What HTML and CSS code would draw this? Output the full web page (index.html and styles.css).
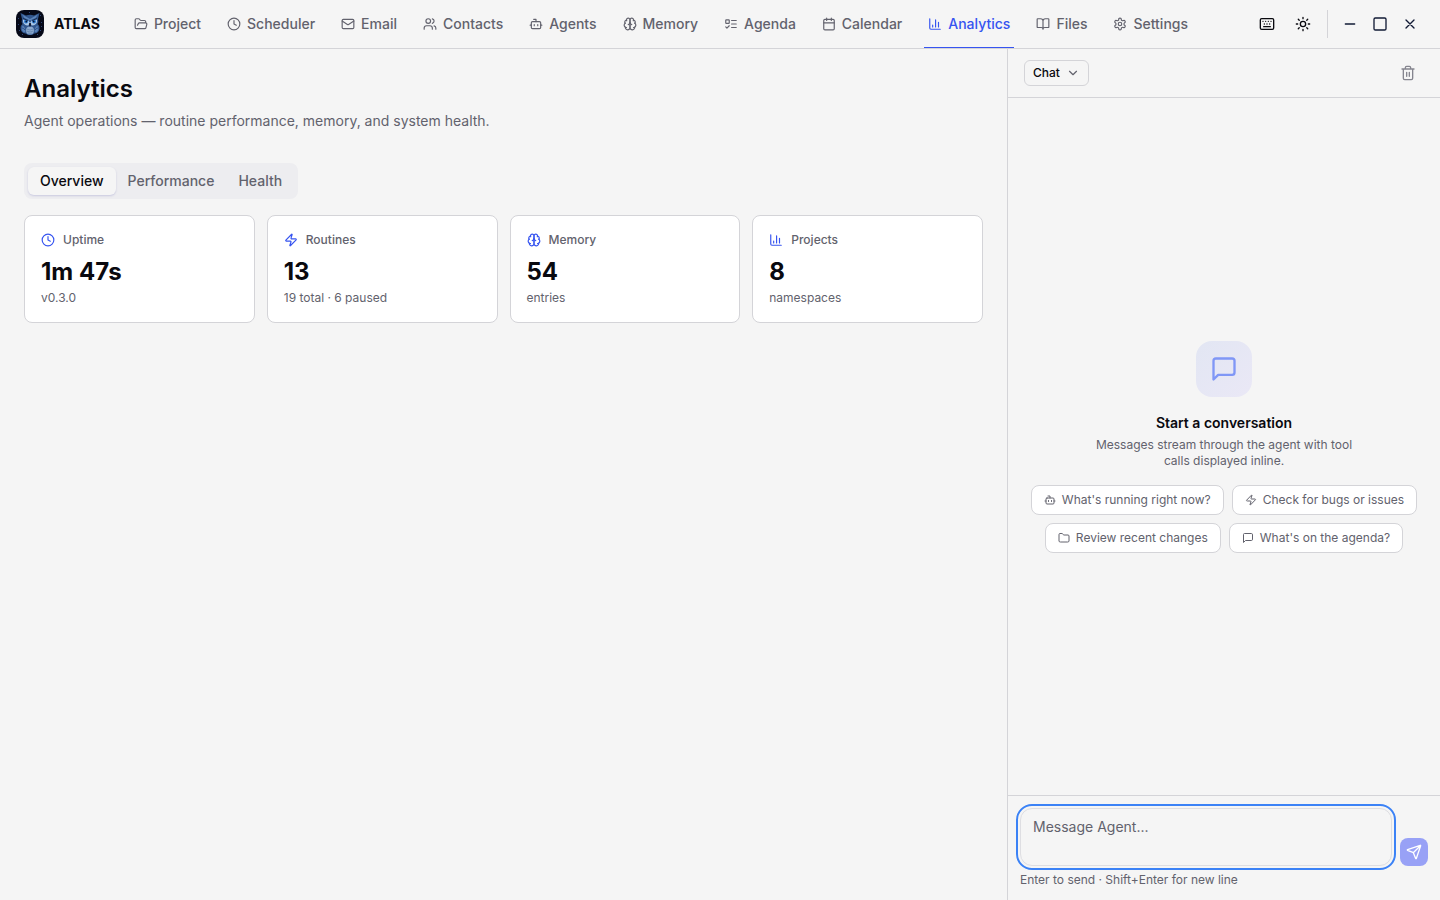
FILE: index.html
```html
<!DOCTYPE html>
<html lang="en">
<head>
<meta charset="utf-8">
<meta name="viewport" content="width=device-width, initial-scale=1">
<title>ATLAS – Analytics</title>
<link rel="stylesheet" href="styles.css">
</head>
<body>
<svg class="sprite" aria-hidden="true">
  <symbol id="folder-open" viewBox="0 0 24 24"><path d="m6 14 1.5-2.9A2 2 0 0 1 9.24 10H20a2 2 0 0 1 1.94 2.5l-1.54 6a2 2 0 0 1-1.95 1.5H4a2 2 0 0 1-2-2V5a2 2 0 0 1 2-2h3.9a2 2 0 0 1 1.69.9l.81 1.2a2 2 0 0 0 1.67.9H18a2 2 0 0 1 2 2v2"/></symbol>
  <symbol id="clock" viewBox="0 0 24 24"><circle cx="12" cy="12" r="10"/><path d="M12 6v6l4 2"/></symbol>
  <symbol id="mail" viewBox="0 0 24 24"><rect x="2" y="4" width="20" height="16" rx="2"/><path d="m22 7-8.99 5.73a2 2 0 0 1-2.02 0L2 7"/></symbol>
  <symbol id="users" viewBox="0 0 24 24"><path d="M16 21v-2a4 4 0 0 0-4-4H6a4 4 0 0 0-4 4v2M16 3.13a4 4 0 0 1 0 7.75M22 21v-2a4 4 0 0 0-3-3.87"/><circle cx="9" cy="7" r="4"/></symbol>
  <symbol id="bot" viewBox="0 0 24 24"><path d="M12 8V4H8"/><rect x="4" y="8" width="16" height="12" rx="2"/><path d="M2 14h2M20 14h2M15 13v2M9 13v2"/></symbol>
  <symbol id="brain" viewBox="0 0 24 24"><path d="M12 5a3 3 0 1 0-5.997.125 4 4 0 0 0-2.526 5.77 4 4 0 0 0 .556 6.588A4 4 0 1 0 12 18Z"/><path d="M12 5a3 3 0 1 1 5.997.125 4 4 0 0 1 2.526 5.77 4 4 0 0 1-.556 6.588A4 4 0 1 1 12 18Z"/><path d="M15 13a4.5 4.5 0 0 1-3-4 4.5 4.5 0 0 1-3 4M17.599 6.5a3 3 0 0 0 .399-1.375M6.003 5.125A3 3 0 0 0 6.401 6.5M3.477 10.896a4 4 0 0 1 .585-.396M19.938 10.5a4 4 0 0 1 .585.396M6 18a4 4 0 0 1-1.967-.516M19.967 17.484A4 4 0 0 1 18 18"/></symbol>
  <symbol id="list-todo" viewBox="0 0 24 24"><rect x="3" y="5" width="6" height="6" rx="1"/><path d="m3 17 2 2 4-4M13 6h8M13 12h8M13 18h8"/></symbol>
  <symbol id="calendar" viewBox="0 0 24 24"><path d="M8 2v4M16 2v4"/><rect x="3" y="4" width="18" height="18" rx="2"/><path d="M3 10h18"/></symbol>
  <symbol id="chart" viewBox="0 0 24 24"><path d="M3 3v16a2 2 0 0 0 2 2h16M18 17V9M13 17V5M8 17v-3"/></symbol>
  <symbol id="book" viewBox="0 0 24 24"><path d="M12 7v14M3 18a1 1 0 0 1-1-1V4a1 1 0 0 1 1-1h5a4 4 0 0 1 4 4 4 4 0 0 1 4-4h5a1 1 0 0 1 1 1v13a1 1 0 0 1-1 1h-6a3 3 0 0 0-3 3 3 3 0 0 0-3-3z"/></symbol>
  <symbol id="settings" viewBox="0 0 24 24"><path d="M12.22 2h-.44a2 2 0 0 0-2 2v.18a2 2 0 0 1-1 1.73l-.43.25a2 2 0 0 1-2 0l-.15-.08a2 2 0 0 0-2.73.73l-.22.38a2 2 0 0 0 .73 2.73l.15.1a2 2 0 0 1 1 1.72v.51a2 2 0 0 1-1 1.74l-.15.09a2 2 0 0 0-.73 2.73l.22.38a2 2 0 0 0 2.73.73l.15-.08a2 2 0 0 1 2 0l.43.25a2 2 0 0 1 1 1.73V20a2 2 0 0 0 2 2h.44a2 2 0 0 0 2-2v-.18a2 2 0 0 1 1-1.73l.43-.25a2 2 0 0 1 2 0l.15.08a2 2 0 0 0 2.73-.73l.22-.39a2 2 0 0 0-.73-2.73l-.15-.08a2 2 0 0 1-1-1.74v-.5a2 2 0 0 1 1-1.74l.15-.09a2 2 0 0 0 .73-2.73l-.22-.38a2 2 0 0 0-2.73-.73l-.15.08a2 2 0 0 1-2 0l-.43-.25a2 2 0 0 1-1-1.73V4a2 2 0 0 0-2-2z"/><circle cx="12" cy="12" r="3"/></symbol>
  <symbol id="keyboard" viewBox="0 0 24 24"><rect x="2" y="4" width="20" height="16" rx="2"/><path d="M10 8h.01M12 12h.01M14 8h.01M16 12h.01M18 8h.01M6 8h.01M7 16h10M8 12h.01"/></symbol>
  <symbol id="sun" viewBox="0 0 24 24"><circle cx="12" cy="12" r="4"/><path d="M12 2v2M12 20v2M4.93 4.93l1.41 1.41M17.66 17.66l1.41 1.41M2 12h2M20 12h2M6.34 17.66l-1.41 1.41M19.07 4.93l-1.41 1.41"/></symbol>
  <symbol id="minus" viewBox="0 0 24 24"><path d="M5 12h14"/></symbol>
  <symbol id="square" viewBox="0 0 24 24"><rect x="3" y="3" width="18" height="18" rx="2"/></symbol>
  <symbol id="close" viewBox="0 0 24 24"><path d="M18 6 6 18M6 6l12 12"/></symbol>
  <symbol id="chevron" viewBox="0 0 24 24"><path d="m6 9 6 6 6-6"/></symbol>
  <symbol id="trash" viewBox="0 0 24 24"><path d="M3 6h18M19 6v14a2 2 0 0 1-2 2H7a2 2 0 0 1-2-2V6M8 6V4a2 2 0 0 1 2-2h4a2 2 0 0 1 2 2v2M10 11v6M14 11v6"/></symbol>
  <symbol id="zap" viewBox="0 0 24 24"><path d="M4 14a1 1 0 0 1-.78-1.63l9.9-10.2a.5.5 0 0 1 .86.46l-1.92 6.02A1 1 0 0 0 13 10h7a1 1 0 0 1 .78 1.63l-9.9 10.2a.5.5 0 0 1-.86-.46l1.92-6.02A1 1 0 0 0 11 14z"/></symbol>
  <symbol id="folder" viewBox="0 0 24 24"><path d="M20 20a2 2 0 0 0 2-2V8a2 2 0 0 0-2-2h-7.9a2 2 0 0 1-1.69-.9L9.6 3.9A2 2 0 0 0 7.93 3H4a2 2 0 0 0-2 2v13a2 2 0 0 0 2 2Z"/></symbol>
  <symbol id="message" viewBox="0 0 24 24"><path d="M21 15a2 2 0 0 1-2 2H7l-4 4V5a2 2 0 0 1 2-2h14a2 2 0 0 1 2 2z"/></symbol>
  <symbol id="send" viewBox="0 0 24 24"><path d="M14.536 21.686a.5.5 0 0 0 .937-.024l6.5-19a.496.496 0 0 0-.635-.635l-19 6.5a.5.5 0 0 0-.024.937l7.93 3.18a2 2 0 0 1 1.112 1.11zM21.854 2.147l-10.94 10.939"/></symbol>
</svg>

<div class="app">
  <header class="topbar">
    <div class="brand">
      <svg class="brand-mark" viewBox="0 0 28 28" aria-hidden="true">
        <rect width="28" height="28" rx="8" fill="#060918"/>
        <path fill="#2d4677" d="M2 8h1v1H2zM24 5h1v1h-1zM2 14h1v1H2zM25 12h1v1h-1zM3 20h1v1H3zM24 20h1v1h-1zM6 24h1v1H6zM21 24h1v1h-1zM13 2h1v1h-1zM25 16h1v1h-1z"/>
        <path fill="#31568d" d="M4.500 3 10 5.500q4-1.500 8 0L23.500 3l-1.500 6q1 3-.5 5 3 2 1.500 6.500-1.500 3-4.500 3l-2.500 1.500h-4l-2.500-1.500q-3 0-4.500-3Q3.500 16 6.500 14 5 12 6 9z"/>
        <path fill="#5d86bd" d="m6 4.500 4.500 2.500L14 9l3.500-2L22 4.500l-2.500 3.500L14 10.500 8.500 8z"/>
        <path fill="#a9c7e6" d="M7 9.500 12 10l2 3 2-3 5-.5q.5 4-2.500 5.500-2 1-4.500-.5-2.500 1.500-4.500.5Q6.500 13.500 7 9.500z"/>
        <path fill="#5780b7" d="M6.500 15.500q2.500 1 3 6l-1.500 1q-3.500-2-1.500-7zM21.500 15.500q-2.500 1-3 6l1.500 1q3.500-2 1.500-7z"/>
        <path d="M6 18q1.500 0 3 2M22 18q-1.500 0-3 2" fill="none" stroke="#203d70" stroke-width=".7"/>
        <ellipse cx="14" cy="20.500" rx="4" ry="4" fill="#8ba9cf"/>
        <path d="M10.500 19q3.500 2 7 0M10.500 21q3.500 2 7 0M12 23q2 1 4 0" fill="none" stroke="#55779f" stroke-width=".6"/>
        <circle cx="10" cy="11.500" r="2" fill="#2878d2"/><circle cx="18" cy="11.500" r="2" fill="#2878d2"/>
        <circle cx="10.300" cy="11.500" r=".9" fill="#06132d"/><circle cx="17.700" cy="11.500" r=".9" fill="#06132d"/>
        <path d="m7 8.500 5 2M21 8.500l-5 2" stroke="#152b53" stroke-width="1"/>
        <path fill="#101b36" d="M13.200 13h1.600l.4 2-1.200 2-1.200-2z"/>
      </svg>
      <span class="brand-name">ATLAS</span>
    </div>
    <nav class="nav" aria-label="Main">
      <a class="nav-link" href="#project"><svg class="icon"><use href="#folder-open"/></svg>Project</a>
      <a class="nav-link" href="#scheduler"><svg class="icon"><use href="#clock"/></svg>Scheduler</a>
      <a class="nav-link" href="#email"><svg class="icon"><use href="#mail"/></svg>Email</a>
      <a class="nav-link" href="#contacts"><svg class="icon"><use href="#users"/></svg>Contacts</a>
      <a class="nav-link" href="#agents"><svg class="icon"><use href="#bot"/></svg>Agents</a>
      <a class="nav-link" href="#memory"><svg class="icon"><use href="#brain"/></svg>Memory</a>
      <a class="nav-link" href="#agenda"><svg class="icon"><use href="#list-todo"/></svg>Agenda</a>
      <a class="nav-link" href="#calendar"><svg class="icon"><use href="#calendar"/></svg>Calendar</a>
      <a class="nav-link nav-link-active" href="#analytics" aria-current="page"><svg class="icon"><use href="#chart"/></svg>Analytics</a>
      <a class="nav-link" href="#files"><svg class="icon"><use href="#book"/></svg>Files</a>
      <a class="nav-link" href="#settings"><svg class="icon"><use href="#settings"/></svg>Settings</a>
    </nav>
    <div class="tools">
      <button class="tool" type="button" aria-label="Keyboard shortcuts"><svg class="icon icon-md"><use href="#keyboard"/></svg></button>
      <button class="tool" type="button" aria-label="Toggle theme"><svg class="icon icon-md"><use href="#sun"/></svg></button>
    </div>
    <div class="window-controls">
      <button class="window-button" type="button" aria-label="Minimize"><svg class="icon icon-md"><use href="#minus"/></svg></button>
      <button class="window-button" type="button" aria-label="Maximize"><svg class="icon icon-md"><use href="#square"/></svg></button>
      <button class="window-button" type="button" aria-label="Close"><svg class="icon icon-md"><use href="#close"/></svg></button>
    </div>
  </header>

  <div class="workspace">
    <main class="main">
      <h1 class="title">Analytics</h1>
      <p class="subtitle">Agent operations — routine performance, memory, and system health.</p>
      <div class="tabs" role="tablist" aria-label="Analytics views">
        <button class="tab tab-active" type="button" role="tab" aria-selected="true">Overview</button>
        <button class="tab" type="button" role="tab" aria-selected="false">Performance</button>
        <button class="tab" type="button" role="tab" aria-selected="false">Health</button>
      </div>
      <div class="cards">
        <section class="card">
          <h2 class="card-label"><svg class="icon"><use href="#clock"/></svg>Uptime</h2>
          <p class="card-value">1m 47s</p>
          <p class="card-note">v0.3.0</p>
        </section>
        <section class="card">
          <h2 class="card-label"><svg class="icon"><use href="#zap"/></svg>Routines</h2>
          <p class="card-value">13</p>
          <p class="card-note">19 total · 6 paused</p>
        </section>
        <section class="card">
          <h2 class="card-label"><svg class="icon"><use href="#brain"/></svg>Memory</h2>
          <p class="card-value">54</p>
          <p class="card-note">entries</p>
        </section>
        <section class="card">
          <h2 class="card-label"><svg class="icon"><use href="#chart"/></svg>Projects</h2>
          <p class="card-value">8</p>
          <p class="card-note">namespaces</p>
        </section>
      </div>
    </main>

    <aside class="chat" aria-label="Chat">
      <div class="chat-header">
        <div class="picker">
          <select class="picker-select" aria-label="Panel"><option>Chat</option></select>
          <svg class="icon picker-chevron"><use href="#chevron"/></svg>
        </div>
        <button class="clear" type="button" aria-label="Clear chat"><svg class="icon icon-md"><use href="#trash"/></svg></button>
      </div>
      <div class="empty">
        <div class="empty-icon"><svg class="icon icon-lg"><use href="#message"/></svg></div>
        <h2 class="empty-title">Start a conversation</h2>
        <p class="empty-text">Messages stream through the agent with tool calls displayed inline.</p>
        <div class="chips">
          <button class="chip" type="button"><svg class="icon icon-sm"><use href="#bot"/></svg>What's running right now?</button>
          <button class="chip" type="button"><svg class="icon icon-sm"><use href="#zap"/></svg>Check for bugs or issues</button>
          <button class="chip" type="button"><svg class="icon icon-sm"><use href="#folder"/></svg>Review recent changes</button>
          <button class="chip" type="button"><svg class="icon icon-sm"><use href="#message"/></svg>What's on the agenda?</button>
        </div>
      </div>
      <form class="composer">
        <div class="composer-row">
          <textarea class="composer-input" aria-label="Message Agent" placeholder="Message Agent..."></textarea>
          <button class="send" type="button" aria-label="Send"><svg class="icon icon-md"><use href="#send"/></svg></button>
        </div>
        <p class="hint">Enter to send · Shift+Enter for new line</p>
      </form>
    </aside>
  </div>
</div>
</body>
</html>
```

FILE: styles.css
```css
:root {
  --bg: #f5f5f5;
  --line: #d4d4d8;
  --ink: #09090f;
  --muted: #62626d;
  --blue: #3654f0;
}

* { box-sizing: border-box; }

body {
  margin: 0;
  background: var(--bg);
  color: var(--ink);
  font-family: Inter, "Liberation Sans", sans-serif;
  font-size: 14px;
  line-height: 20px;
}

h1, h2, p { margin: 0; }

button, select, textarea { font: inherit; color: inherit; }

button {
  border: 0;
  padding: 0;
  background: none;
  cursor: pointer;
}

.sprite { display: none; }

.icon {
  width: 14px;
  height: 14px;
  flex: none;
  fill: none;
  stroke: currentColor;
  stroke-width: 2;
  stroke-linecap: round;
  stroke-linejoin: round;
}
.icon-sm { width: 12px; height: 12px; }
.icon-md { width: 16px; height: 16px; }
.icon-lg { width: 28px; height: 28px; }

.app {
  display: flex;
  flex-direction: column;
  min-height: 100vh;
}

.topbar {
  display: flex;
  align-items: center;
  height: 49px;
  padding: 0 16px;
  border-bottom: 1px solid var(--line);
}

.brand {
  display: flex;
  align-items: center;
  gap: 10px;
  margin-right: 22px;
}
.brand-mark { width: 28px; height: 28px; }
.brand-name { font-weight: 700; }

.nav {
  display: flex;
  align-self: stretch;
  gap: 2px;
}
.nav-link {
  position: relative;
  display: flex;
  align-items: center;
  gap: 6px;
  padding: 0 12px;
  color: var(--muted);
  font-weight: 500;
  text-decoration: none;
}
.nav-link-active { color: var(--blue); }
.nav-link-active::after {
  content: "";
  position: absolute;
  right: 8px;
  bottom: 0;
  left: 8px;
  height: 1px;
  background: var(--blue);
}

.tools {
  display: flex;
  gap: 4px;
  margin-left: auto;
  padding-right: 8px;
}
.tool, .window-button {
  display: grid;
  place-items: center;
  width: 32px;
  height: 28px;
}
.window-controls {
  display: flex;
  gap: 2px;
  padding-left: 8px;
  border-left: 1px solid var(--line);
}
.window-button { width: 28px; color: #111a35; }

.workspace {
  display: flex;
  flex: 1;
}

.main {
  flex: 1;
  min-width: 0;
  padding: 24px;
}
.title {
  font-size: 24px;
  font-weight: 600;
  line-height: 32px;
}
.subtitle {
  margin-top: 4px;
  color: var(--muted);
  line-height: 24px;
}

.tabs {
  display: inline-flex;
  margin-top: 30px;
  padding: 4px;
  border-radius: 8px;
  background: #ededf0;
}
.tab {
  padding: 4px 12px;
  border-radius: 6px;
  color: var(--muted);
  font-weight: 500;
}
.tab-active {
  background: var(--bg);
  color: var(--ink);
  box-shadow: 0 1px 2px #6464b440;
}

.cards {
  display: grid;
  grid-template-columns: repeat(4, 1fr);
  gap: 12px;
  margin-top: 16px;
}
.card {
  padding: 16px;
  border: 1px solid var(--line);
  border-radius: 8px;
  background: #fff;
}
.card-label {
  display: flex;
  align-items: center;
  gap: 8px;
  color: var(--muted);
  font-size: 12px;
  font-weight: 500;
  line-height: 16px;
}
.card-label .icon { color: var(--blue); }
.card-value {
  margin-top: 8px;
  font-size: 24px;
  font-weight: 700;
  line-height: 32px;
}
.card-note {
  margin-top: 2px;
  color: var(--muted);
  font-size: 12px;
  line-height: 16px;
}

.chat {
  display: flex;
  flex-direction: column;
  width: 30%;
  min-width: 433px;
  border-left: 1px solid var(--line);
}
.chat-header {
  display: flex;
  align-items: center;
  justify-content: space-between;
  height: 49px;
  padding: 0 16px;
  border-bottom: 1px solid var(--line);
}
.picker { position: relative; }
.picker-select {
  appearance: none;
  display: block;
  height: 26px;
  padding: 0 28px 0 8px;
  border: 1px solid var(--line);
  border-radius: 6px;
  background: var(--bg);
  font-size: 12px;
  font-weight: 500;
}
.picker-chevron {
  position: absolute;
  top: 6px;
  right: 9px;
  color: var(--muted);
  pointer-events: none;
}
.clear {
  display: grid;
  place-items: center;
  width: 32px;
  height: 32px;
  color: #85858f;
}

.empty {
  display: flex;
  flex: 1;
  flex-direction: column;
  align-items: center;
  justify-content: center;
  padding: 16px;
  text-align: center;
}
.empty-icon {
  display: grid;
  place-items: center;
  width: 56px;
  height: 56px;
  border-radius: 16px;
  background: linear-gradient(135deg, #e2e6f3, #eae8f6);
  color: #8097f6;
}
.empty-title {
  margin-top: 16px;
  font-size: 14px;
  font-weight: 600;
  line-height: 20px;
}
.empty-text {
  max-width: 280px;
  margin-top: 4px;
  color: var(--muted);
  font-size: 12px;
  line-height: 16px;
}
.chips {
  display: flex;
  flex-wrap: wrap;
  justify-content: center;
  gap: 8px;
  margin-top: 16px;
}
.chip {
  display: flex;
  align-items: center;
  gap: 6px;
  padding: 6px 12px;
  border: 1px solid var(--line);
  border-radius: 8px;
  background: #fff;
  color: var(--muted);
  font-size: 12px;
  line-height: 16px;
}

.composer {
  padding: 12px;
  border-top: 1px solid var(--line);
}
.composer-row {
  display: flex;
  align-items: flex-end;
  gap: 8px;
}
.composer-input {
  flex: 1;
  min-width: 0;
  height: 58px;
  padding: 8px 12px;
  border: 1px solid #dedee2;
  border-radius: 12px;
  outline: 2px solid #3b82f6;
  outline-offset: 2px;
  background: var(--bg);
  resize: none;
}
.composer-input::placeholder { color: var(--muted); }
.send {
  display: grid;
  place-items: center;
  width: 28px;
  height: 28px;
  border-radius: 8px;
  background: #98a1f6;
  color: #fff;
}
.hint {
  margin-top: 6px;
  color: var(--muted);
  font-size: 12px;
  line-height: 16px;
}
```
